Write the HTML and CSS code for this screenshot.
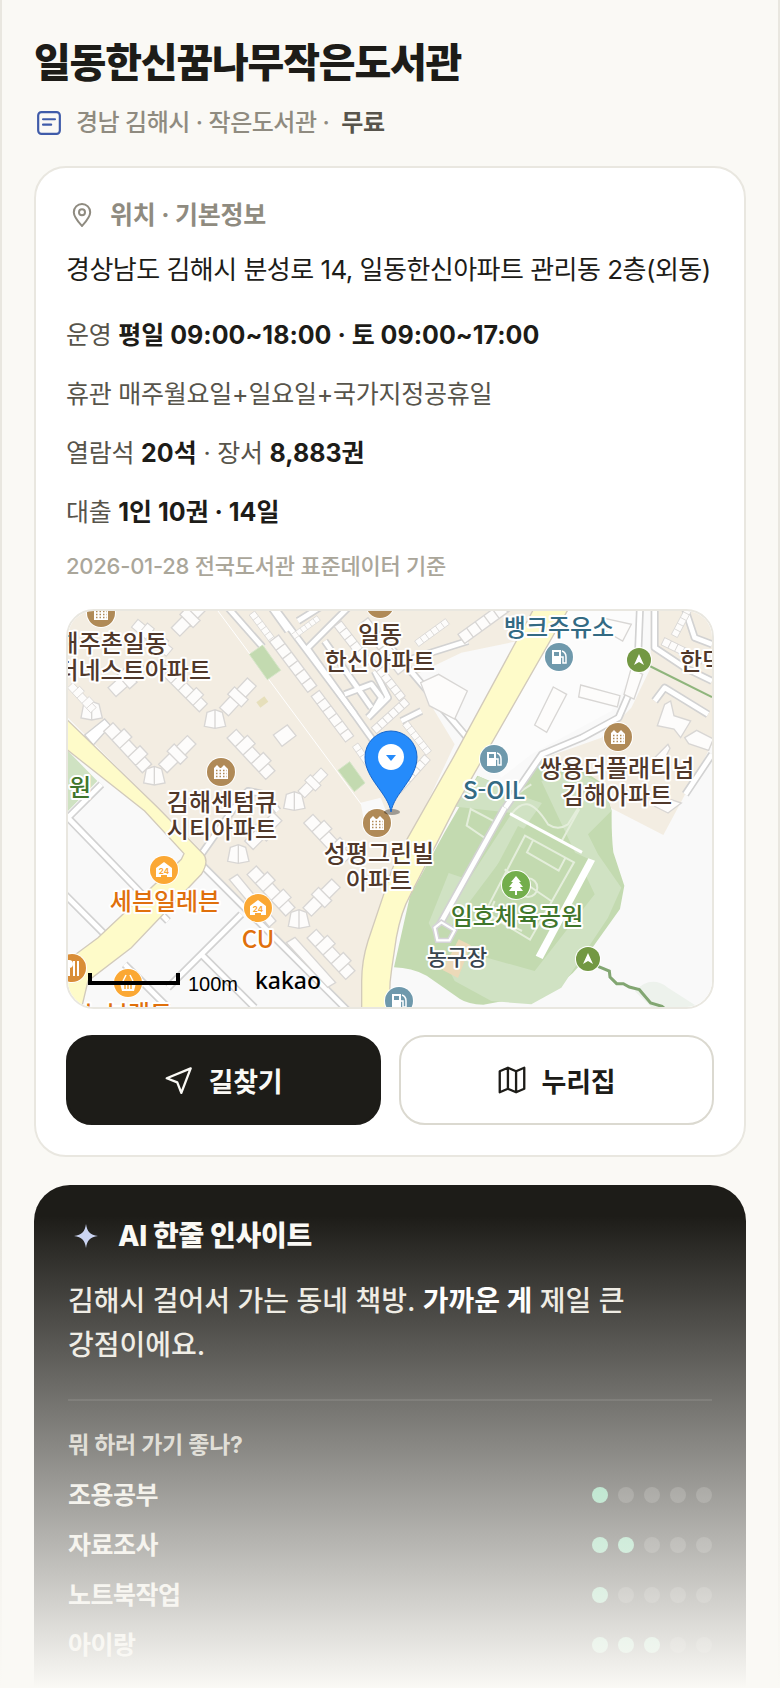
FILE: index.html
```html
<!DOCTYPE html>
<html lang="ko">
<head>
    <meta charset="UTF-8">
    <meta name="viewport" content="width=device-width, initial-scale=1.0">
    <title>일동한신꿈나무작은도서관</title>
    <link rel="stylesheet" href="styles.css">
</head>
<body>
    <main class="page">
        <header class="header">
            <h1>일동한신꿈나무작은도서관</h1>
            <div class="meta">
                <svg class="icon-meta" viewBox="0 0 24 24" aria-hidden="true">
                    <rect x="2" y="2" width="20" height="20" rx="3"/>
                    <path d="M6.500 8.500h11M6.500 13.500h7.500"/>
                </svg>
                <span>경남 김해시 · 작은도서관 ·</span>
                <strong>무료</strong>
            </div>
        </header>

        <!-- 위치 · 기본정보 -->
        <section class="card">
            <h2 class="card-title">
                <svg class="icon-pin" viewBox="0 0 24 24" aria-hidden="true">
                    <path d="M12 23C8 18.500 3.800 14 3.800 9.200a8.200 8.200 0 0 1 16.400 0C20.200 14 16 18.500 12 23z"/>
                    <circle cx="12" cy="9.300" r="3"/>
                </svg>
                위치 · 기본정보
            </h2>
            <p class="address">경상남도 김해시 분성로 14, 일동한신아파트 관리동 2층(외동)</p>
            <p class="info">운영 <strong>평일 09:00~18:00 · 토 09:00~17:00</strong></p>
            <p class="info">휴관 매주월요일+일요일+국가지정공휴일</p>
            <p class="info">열람석 <strong>20석</strong> · 장서 <strong>8,883권</strong></p>
            <p class="info">대출 <strong>1인 10권 · 14일</strong></p>
            <p class="note">2026-01-28 전국도서관 표준데이터 기준</p>

            <div class="map">
                <svg viewBox="0 0 644 396" preserveAspectRatio="xMidYMid slice" role="img" aria-label="지도">
                    <defs>
                        <g id="strip" class="bld">
                            <path d="M0 0h36v-12h34v12h36v-12h34v12h30v38H0zM36 0v38M70 0v38M106 0v38M140 0v38"/>
                        </g>
                        <g id="arm" class="bld">
                            <path d="M0 0h46v-10h30v10h46v36H76v10H46V36H0zM46 0v36M76 0v36"/>
                        </g>
                        <g id="kite" class="bld">
                            <path d="M-24-20L0-28 22-20 32 22 0 28-32 22zM0-28V28"/>
                        </g>
                        <g id="row" class="bld">
                            <path d="M0 0h190v34H0zM32 0v34M64 0v34M96 0v34M128 0v34M160 0v34"/>
                        </g>
                        <g id="apt">
                            <circle class="halo" r="15"/><circle r="14" fill="#b08a57"/>
                            <path fill="#fff" d="M-7-4l3-3 3 3h1l3-3 3 3 1 1V7H-7z"/>
                            <path stroke="#b08a57" stroke-width="1.500" stroke-dasharray="1.500 2" d="M-5-1.500H6M-5 1.500H6M-5 4.500H6"/>
                        </g>
                        <g id="gas">
                            <circle class="halo" r="15"/><circle r="14" fill="#6f99ac"/>
                            <path fill="#fff" d="M-7-7H2V7H-7z"/><path fill="#6f99ac" d="M-5-5H0v4h-5z"/>
                            <path fill="none" stroke="#fff" stroke-width="1.500" d="M3-6c3 1 4 3 4 6v6H4V0H2"/>
                        </g>
                        <g id="store">
                            <circle class="halo" r="15"/><circle r="14" fill="#fba834"/>
                            <path fill="#fff" d="M-8-2L0-8 8-2V7H3V5H-3V7H-8z"/>
                            <text class="n24" y="4">24</text>
                        </g>
                        <g id="gate">
                            <circle class="halo" r="13"/><circle r="12" fill="#739843"/>
                            <path fill="#fff" d="M0-6L5 5 0 2-5 5z"/>
                        </g>
                    </defs>

                    <rect width="644" height="396" fill="#f9f9f9"/>

                    <!-- 지형, 도로, 건물 -->
                    <g transform="scale(.33333)">
                        <path fill="#f3ede2" d="M0 0H1400L1350 90 1180 125 1036 194 1160 400 956 834 881 1074V1188H816L406 764 411 730 0 320z"/>
                        <path fill="#f3ede2" d="M1748 0H1932V400L1786 672 1646 600 1530 540 1430 440 1600 380 1690 290 1748 170z"/>
                        <path fill="#f9f9f9" d="M878 575l60-15 20 50-70 20z"/>
                        <path fill="#cfe2c2" d="M0 420L88 510 0 600z"/>

                        <path fill="#c3dab0" d="M1228 494L1336 539 1416 429 1546 479 1606 519 1631 599Q1630 670 1636 724L1669 824 1656 894 1556 1034Q1520 1090 1466 1124T1366 1159L1246 1181Q1200 1180 1176 1164L1076 1094Q1030 1070 978 1069L1026 854 1130 664z"/>
                        <path fill="#d0e2c3" d="M1232 496l100 50 90 30-70 100-240 320-30-60 60-150 60 20 130-200-180-20zM1420 510l100-30 86 40 24 80-70 70 30 60 70 100-40 90-140 210-90 50-120-10-110-60-30-60 90-20 180 50 180-230z"/>
                        <path fill="#c3dab0" d="M1350 645l225 105-175 290-190-130z"/>
                        <path class="field" d="M1371 674l147 80-132 232-135-82zM1395 688l-18 36 95 55 20-38M1310 775l140 95M1280 870l-18 40 100 50"/>
                        <circle class="field" cx="1380" cy="830" r="28"/>
                        <path class="field" d="M1208 594l72 38-28 50-56-38zM1390 520q-50 30-70 60M1330 610c30-40 60-50 110 30q30 20 60 0l50-80M1480 692l54-98"/>
                        <path fill="none" stroke="#fff" stroke-width="9" d="M1326 608l216 116"/>
                        <path fill="#fff" d="M1561 742l20 7-157 295-21-10z"/>
                        <path fill="#ecd9b8" d="M1172 985l36 18-38 98-46-24z"/>
                        <path fill="#edf2ec" d="M1700 1140q50-50 100-10l90 58H1750z"/>
                        <path fill="#fcfcfc" d="M1440 0h270l-10 170-70 130-240 130-90 70-70-90z"/>

                        <g class="road-case">
                            <path d="M480-10L584 108M620-10l240 320M660 60l-50-70M690 30l80-50 40-40M960 100l280 330M1010 150l190-60"/>
                            <path d="M840-10l-60 60-62 62 200 280M770 90l140 200M830 250l80-30 30 40-30 50M900 320l60-60-40-80"/>
                            <path d="M1716-10l-8 200-56 130-110 60-120 50-110 160M1760-10V110l90 60 82 40M1760 270l30-40 130 80M1932 430l-80 120M1850-10l30 90 52 20"/>
                            <path d="M1310 590L1110 950M1000 330l60-30"/>
                            <path d="M100 520L-10 630M-10 610l310 320M-10 850l120 120M400 730L520 560l20-20 50 10 40 50M404 764l440 440M520 910L300 1130M400 1030l160 160M170 1060l130 130"/>
                        </g>
                        <g class="road">
                            <path d="M480-10L584 108M620-10l240 320M660 60l-50-70M690 30l80-50 40-40M960 100l280 330M1010 150l190-60"/>
                            <path d="M840-10l-60 60-62 62 200 280M770 90l140 200M830 250l80-30 30 40-30 50M900 320l60-60-40-80"/>
                            <path d="M1716-10l-8 200-56 130-110 60-120 50-110 160M1760-10V110l90 60 82 40M1760 270l30-40 130 80M1932 430l-80 120M1850-10l30 90 52 20"/>
                            <path d="M1310 590L1110 950M1000 330l60-30"/>
                            <path d="M100 520L-10 630M-10 610l310 320M-10 850l120 120M400 730L520 560l20-20 50 10 40 50M404 764l440 440M520 910L300 1130M400 1030l160 160M170 1060l130 130"/>
                        </g>
                        <path fill="#c3dab0" stroke="#d5d3d8" stroke-width="16" d="M1100 950l20-16 40 24-16 30-36 0z"/>
                        <path fill="none" stroke="#fff" stroke-width="7" d="M1100 950l20-16 40 24-16 30-36 0z"/>
                        <path fill="#fff" stroke="#d2d2d2" stroke-width="4" d="M50 372l60-48 18 20-52 58z"/>

                        <path class="main-road" d="M1396-4L1156 439 1006 704Q975 760 961 809L900 990Q881 1050 881 1110V1194H966Q962 1130 971 1074L985 980Q1000 900 1026 854L1166 580 1500-4z"/>
                        <path class="main-road" d="M-4 325L270 590 405 728Q425 750 400 790L190 1010 60 1110 40 1194H-4V1050L90 980 340 745 348 728 230 600-4 415z"/>
                        <path fill="none" stroke="#fff" stroke-width="3" d="M450 0L880 580"/>
                        <path fill="none" stroke="#8fb57c" stroke-width="6" d="M1745 165L1932 258"/>
                        <path fill="none" stroke="#82a672" stroke-width="9" d="M1590 1066l34 14 2 18 20 20h20l18 10 30 8 34 40 34 10 14 12"/>

                        <path fill="#c3dab0" stroke="#d5e5c8" stroke-width="3" d="M544 130l40-28 54 76-40 28zM810 478l35-26 46 64-32 26z"/>
                        <path fill="#e6dfbb" d="M565 274l24-18 12 16-24 18z"/>

                        <use href="#kite" x="71" y="299"/>
                        <use href="#kite" x="441" y="324"/>
                        <use href="#kite" x="259" y="494"/>
                        <use href="#kite" x="679" y="570"/>
                        <use href="#kite" x="511" y="729"/>
                        <use href="#kite" x="693" y="924"/>
                        <use href="#arm" transform="translate(455 290) rotate(-47)"/>
                        <use href="#arm" transform="translate(272 460) rotate(-45)"/>
                        <use href="#arm" transform="translate(690 540) rotate(-45) scale(.8)"/>
                        <use href="#arm" transform="translate(530 690) rotate(-45)"/>
                        <use href="#arm" transform="translate(705 890) rotate(-45)"/>
                        <use href="#arm" transform="translate(120 230) rotate(-42)"/>
                        <use href="#arm" transform="translate(310 50) rotate(-45)"/>
                        <use href="#strip" transform="translate(135 335) rotate(47)"/>
                        <use href="#strip" transform="translate(310 170) rotate(45) scale(.9)"/>
                        <use href="#strip" transform="translate(505 355) rotate(47)"/>
                        <use href="#strip" transform="translate(15 215) rotate(47) scale(.6)"/>
                        <use href="#strip" transform="translate(210 25) rotate(40) scale(.8)"/>
                        <use href="#strip" transform="translate(735 610) rotate(47)"/>
                        <use href="#strip" transform="translate(565 765) rotate(47)"/>
                        <use href="#strip" transform="translate(745 955) rotate(47)"/>
                        <path class="bld" d="M484 806l24-16 116 140-20 18zM655 995l26-16 122 136-24 14zM616 372l42-30 26 32-42 32zM1058 215l54-25 86 50-38 84-76-40z"/>
                        <path class="bld" d="M1456 228l40 22-60 114-36-22zM1538 222l118 32-8 34-116-30zM1690 170l34 20-26 74-30-14zM1600 20l90 20-26 50-60-34z"/>
                        <path class="bld" d="M1790 280l18-10 10 44 50 16-30 50-20-26-50-10zM1850 380l36-22 50 26-14 34-60-20zM1800 400l-50 50 26 22 30-60zM1800 606l-40-20 20-30 60 20z"/>
                        <use href="#row" transform="translate(560 0) rotate(53) scale(.6)"/>
                        <use href="#row" transform="translate(632 72) rotate(53)"/>
                        <use href="#row" transform="translate(754 238) rotate(53) scale(.9)"/>
                        <use href="#row" transform="translate(870 396) rotate(55) scale(.6)"/>
                        <use href="#row" transform="translate(820 30) rotate(52) scale(.8)"/>
                        <use href="#row" transform="translate(900 20) rotate(52)"/>
                        <use href="#row" transform="translate(910 350) rotate(-42) scale(.7)"/>
                        <use href="#row" transform="translate(1020 330) rotate(52) scale(.6)"/>
                        <use href="#row" transform="translate(980 530) rotate(-48) scale(.7)"/>
                        <use href="#row" transform="translate(1040 90) rotate(-36) scale(.6)"/>
                        <use href="#row" transform="translate(1170 70) rotate(-36)"/>
                        <use href="#row" transform="translate(670 70) rotate(-36) scale(.5)"/>
                        <use href="#row" transform="translate(1790 80) rotate(26) scale(.7)"/>
                        <use href="#row" transform="translate(1810 70) rotate(-62) scale(.6)"/>
                        <use href="#row" transform="translate(930 150) rotate(52) scale(.7)"/>
                    </g>

                    <!-- 장소 -->
                    <use href="#apt" x="33" y="2"/>
                    <use href="#apt" x="312" y="-7"/>
                    <use href="#apt" x="153" y="161"/>
                    <use href="#apt" x="309" y="212"/>
                    <use href="#apt" x="550" y="126"/>
                    <use href="#gas" x="491" y="46"/>
                    <use href="#gas" x="426" y="148"/>
                    <use href="#gas" x="331" y="390"/>
                    <use href="#store" x="96" y="259"/>
                    <use href="#store" x="190" y="297"/>
                    <use href="#gate" x="571" y="49"/>
                    <use href="#gate" x="520" y="348"/>
                    <g transform="translate(448 274)">
                        <circle class="halo" r="15"/><circle r="14" fill="#73ae4c"/>
                        <path fill="#fff" d="M0-9l5 6H3l4 5H4l3 4H1v4h-2V6h-6l3-4h-3l4-5h-2z"/>
                    </g>
                    <g transform="translate(4 357)">
                        <circle class="halo" r="15"/><circle r="14" fill="#d98d37"/>
                        <path stroke="#fff" stroke-width="2" d="M2-7V8M6-7V8"/><circle cx="-3" cy="-4" r="4" fill="#fff"/><path stroke="#fff" stroke-width="2" d="M-3 0V8"/>
                    </g>
                    <g transform="translate(60 372)">
                        <circle class="halo" r="15"/><circle r="14" fill="#fba834"/>
                        <path fill="#fff" d="M-9-2H9V0H8L6 8H-6L-8 0H-9z"/>
                        <path fill="none" stroke="#fff" stroke-width="1.500" d="M-5-2l3-6M5-2L2-8"/><path stroke="#fba834" stroke-width="1.500" d="M-3 1v5M0 1v5M3 1v5"/>
                    </g>

                    <g class="place apt">
                        <text class="end" x="99" y="41">해주촌일동</text>
                        <text class="end" x="143" y="68">더네스트아파트</text>
                        <text x="312" y="32">일동</text>
                        <text x="312" y="59">한신아파트</text>
                        <text x="154" y="200">김해센텀큐</text>
                        <text x="154" y="227">시티아파트</text>
                        <text x="311" y="251">성평그린빌</text>
                        <text x="311" y="278">아파트</text>
                        <text x="549" y="166">쌍용더플래티넘</text>
                        <text x="549" y="193">김해아파트</text>
                        <text x="634" y="59">한덕</text>
                    </g>
                    <g class="place oil">
                        <text x="491" y="25">뱅크주유소</text>
                        <text x="426" y="188">S-OIL</text>
                    </g>
                    <g class="place shop">
                        <text x="97" y="299">세븐일레븐</text>
                        <text x="190" y="337">CU</text>
                        <text x="60" y="411">노브랜드</text>
                    </g>
                    <g class="place park">
                        <text x="12" y="185">원</text>
                        <text x="449" y="314">임호체육공원</text>
                    </g>
                    <g class="place court">
                        <text x="389" y="354">농구장</text>
                    </g>

                    <!-- 마커 -->
                    <ellipse cx="324" cy="201" rx="8" ry="3" fill="#000" opacity=".35"/>
                    <path fill="#258bfb" stroke="#1767cc" d="M323 201C320 182 297 168 297 146a26 26 0 0 1 52 0C349 168 326 182 323 201z"/>
                    <circle cx="323" cy="146" r="13" fill="#fff"/>
                    <path fill="#258bfb" d="M318 144h10l-5 6z"/>

                    <!-- 축척 -->
                    <path fill="none" stroke="#000" stroke-width="4" d="M22 362V372H110V362"/>
                    <text class="scale" x="120" y="380">100m</text>
                    <text class="brand" x="187" y="378">kakao</text>
                </svg>
            </div>

            <div class="actions">
                <a class="btn btn-dark" href="#">
                    <svg viewBox="0 0 24 24" aria-hidden="true"><path d="M22 2L1.500 10.500l9 3.500 3.500 9z"/></svg>
                    길찾기
                </a>
                <a class="btn btn-light" href="#">
                    <svg viewBox="0 0 24 24" aria-hidden="true"><path d="M1.500 4.500L8.500 1.500l7 3 7-3v18l-7 3-7-3-7 3zM8.500 1.500v18M15.500 4.500v18"/></svg>
                    누리집
                </a>
            </div>
        </section>

        <!-- AI 한줄 인사이트 -->
        <section class="insight">
            <h2 class="insight-title">
                <svg viewBox="0 0 24 24" aria-hidden="true"><path d="M12 0c1.200 8 4 10.800 12 12-8 1.200-10.800 4-12 12-1.200-8-4-10.800-12-12 8-1.200 10.800-4 12-12z"/></svg>
                AI 한줄 인사이트
            </h2>
            <p class="insight-text">김해시 걸어서 가는 동네 책방. <strong>가까운 게</strong> 제일 큰 강점이에요.</p>
            <div class="purpose">
                <h3>뭐 하러 가기 좋나?</h3>
                <ul>
                    <li>조용공부 <span class="dots"><i class="on"></i><i></i><i></i><i></i><i></i></span></li>
                    <li>자료조사 <span class="dots"><i class="on"></i><i class="on"></i><i></i><i></i><i></i></span></li>
                    <li>노트북작업 <span class="dots"><i class="on"></i><i></i><i></i><i></i><i></i></span></li>
                    <li>아이랑 <span class="dots"><i class="on"></i><i class="on"></i><i class="on"></i><i></i><i></i></span></li>
                </ul>
            </div>
        </section>
        <div class="fade"></div>
    </main>
</body>
</html>
```
FILE: styles.css
```css
* {
    margin: 0;
    padding: 0;
    box-sizing: border-box;
}

body {
    font-family: Inter, 'Noto Sans CJK KR', sans-serif;
    font-size: 24px;
    letter-spacing: -0.01em;
    word-break: keep-all;
    background-color: #faf9f5;
    color: #1d1c18;
}

.page {
    position: relative;
    display: flex;
    flex-direction: column;
    min-height: 100vh;
    padding: 38px 32px 0;
    border-left: 2px solid #e9e7e0;
    border-right: 2px solid #e9e7e0;
}

.header {
    margin-bottom: 26px;
}

h1 {
    font-size: 40px;
    line-height: 50px;
    font-weight: 800;
    letter-spacing: -0.03em;
}

.meta {
    display: flex;
    align-items: center;
    margin-top: 18px;
    line-height: 34px;
    font-weight: 500;
    letter-spacing: -0.02em;
    color: #8f8b80;
}

.meta strong {
    margin-left: 12px;
    font-weight: 600;
    color: #57544b;
}

.icon-meta {
    width: 26px;
    height: 26px;
    margin: 0 14px 0 2px;
    fill: none;
    stroke: #3f5ba9;
    stroke-width: 2;
    stroke-linecap: round;
}

.card {
    padding: 30px;
    background-color: #fff;
    border: 2px solid #e9e7e0;
    border-radius: 32px;
}

.card-title {
    display: flex;
    align-items: center;
    gap: 16px;
    font-size: 25px;
    line-height: 34px;
    font-weight: 700;
    color: #8f8b80;
}

.icon-pin {
    width: 24px;
    height: 24px;
    margin-left: 4px;
    fill: none;
    stroke: #8f8b80;
    stroke-width: 2;
}

.address {
    margin-top: 18px;
    font-size: 26px;
    line-height: 40px;
    letter-spacing: -0.02em;
}

.info {
    margin-top: 23px;
    font-size: 25px;
    line-height: 36px;
    color: #57544b;
}

.address + .info {
    margin-top: 27px;
}

.info strong {
    font-weight: 700;
    letter-spacing: 0;
    color: #1d1c18;
}

.note {
    margin-top: 20px;
    font-size: 22px;
    line-height: 32px;
    font-weight: 500;
    color: #aaa69a;
}

.map {
    margin-top: 27px;
    border: 2px solid #e9e7e0;
    border-radius: 28px;
    overflow: hidden;
}

.map svg {
    display: block;
    width: 100%;
}

.bld {
    fill: #fdfcfb;
    stroke: #d8d6d4;
    stroke-width: 4;
}

.field {
    fill: none;
    stroke: #e4eedb;
    stroke-width: 6;
}

.road-case,
.road {
    fill: none;
    stroke: #d2d2d2;
    stroke-width: 24;
    stroke-linejoin: round;
}

.road {
    stroke: #fff;
    stroke-width: 14;
}

.main-road {
    fill: #fefbc9;
    stroke: #d2cabb;
    stroke-width: 4;
}

.halo {
    fill: #fff;
}

.n24 {
    font-size: 8px;
    font-weight: 700;
    letter-spacing: 0;
    text-anchor: middle;
    fill: #fba834;
}

.place {
    font-family: 'Noto Sans CJK KR', sans-serif;
    font-size: 24px;
    font-weight: 500;
    letter-spacing: 0;
    text-anchor: middle;
    stroke: #fff;
    stroke-width: 4px;
    stroke-linejoin: round;
    paint-order: stroke;
}

.place .end {
    text-anchor: end;
}

.apt {
    fill: #50382a;
}

.oil {
    fill: #336a83;
}

.shop {
    fill: #e0700c;
}

.park {
    fill: #3f762b;
}

.court {
    font-size: 22px;
    fill: #39454f;
}

.scale {
    font-family: 'Liberation Sans', sans-serif;
    font-size: 20px;
    letter-spacing: 0;
}

.brand {
    font-family: 'Noto Sans', sans-serif;
    font-size: 23px;
    font-weight: 500;
    letter-spacing: 0;
}

.actions {
    display: grid;
    grid-template-columns: 1fr 1fr;
    gap: 18px;
    margin-top: 26px;
}

.btn {
    display: flex;
    align-items: center;
    justify-content: center;
    gap: 16px;
    height: 90px;
    border: 2px solid #1d1c18;
    border-radius: 26px;
    font-size: 27px;
    font-weight: 700;
    color: #1d1c18;
    text-decoration: none;
}

.btn svg {
    width: 28px;
    height: 28px;
    fill: none;
    stroke: currentColor;
    stroke-width: 2;
    stroke-linejoin: round;
}

.btn-dark {
    background-color: #1d1c18;
    color: #faf9f5;
}

.btn-light {
    background-color: #fff;
    border-color: #dbd9d0;
}

.insight {
    flex: 1;
    margin-top: 28px;
    padding: 34px 34px 20px;
    background-color: #1d1c18;
    border-radius: 36px 36px 0 0;
    color: #faf9f5;
}

.insight-title {
    display: flex;
    align-items: center;
    gap: 20px;
    font-size: 28px;
    line-height: 34px;
    font-weight: 800;
}

.insight-title svg {
    width: 24px;
    height: 24px;
    margin-left: 6px;
    fill: #c9d3f2;
}

.insight-text {
    margin-top: 26px;
    font-size: 28px;
    line-height: 44px;
    font-weight: 500;
    letter-spacing: 0;
    color: #ece9e0;
}

.insight-text strong {
    font-weight: 700;
    color: #fff;
}

.purpose {
    margin-top: 32px;
    padding-top: 28px;
    border-top: 2px solid #33322e;
}

.purpose h3 {
    font-size: 23px;
    line-height: 32px;
    font-weight: 700;
    color: #c9c6bc;
}

.purpose ul {
    display: flex;
    flex-direction: column;
    gap: 16px;
    margin-top: 17px;
    list-style: none;
}

.purpose li {
    display: flex;
    align-items: center;
    justify-content: space-between;
    font-size: 25px;
    line-height: 34px;
    font-weight: 600;
    letter-spacing: -0.02em;
    color: #ece9e0;
}

.dots {
    display: flex;
    gap: 10px;
}

.dots i {
    width: 16px;
    height: 16px;
    border-radius: 50%;
    background-color: #42413d;
}

.dots .on {
    background-color: #74cfa2;
}

/* 아래쪽으로 갈수록 흐려지는 효과 */
.fade {
    position: absolute;
    left: -2px;
    right: -2px;
    bottom: 0;
    height: 472px;
    background: linear-gradient(rgba(250, 249, 245, 0), #faf9f5);
    pointer-events: none;
}
```
